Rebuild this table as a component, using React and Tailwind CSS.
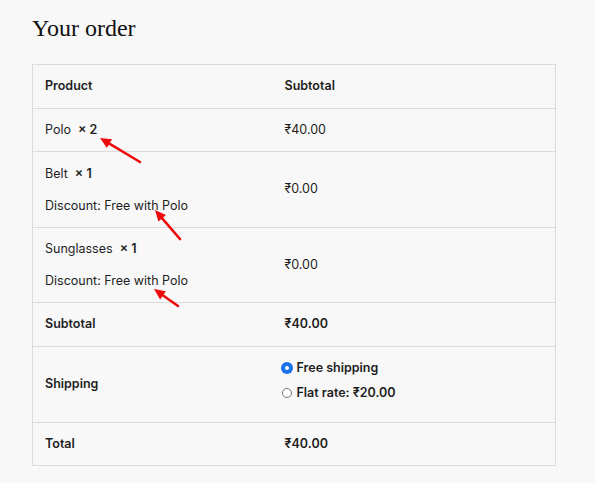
const items = [
  { name: 'Polo', qty: 2, price: '₹40.00', h: 'h-[43px]' },
  { name: 'Belt', qty: 1, price: '₹0.00', note: 'Discount: Free with Polo', h: 'h-[76px]' },
  { name: 'Sunglasses', qty: 1, price: '₹0.00', note: 'Discount: Free with Polo', h: 'h-[75px]' },
]

function Arrow({ x1, y1, x2, y2 }) {
  // x1,y1 = tail, x2,y2 = tip
  const dx = x2 - x1
  const dy = y2 - y1
  const len = Math.hypot(dx, dy)
  const ux = dx / len
  const uy = dy / len
  const hl = 11
  const hw = 5
  const bx = x2 - ux * hl
  const by = y2 - uy * hl
  const pts = `${x2},${y2} ${bx - uy * hw},${by + ux * hw} ${bx + uy * hw},${by - ux * hw}`
  return (
    <g>
      <line x1={x1} y1={y1} x2={bx + ux * 2} y2={by + uy * 2} stroke="#ee0a0a" strokeWidth="2.6" strokeLinecap="round" />
      <polygon points={pts} fill="#ee0a0a" />
    </g>
  )
}

function Radio({ checked }) {
  return (
    <span
      className={
        'inline-block w-[10px] h-[10px] -ml-[3px] rounded-full shrink-0 ' +
        (checked ? 'border-[3px] border-[#1a73e8] bg-white ring-1 ring-[#1a73e8]' : 'border border-[#767676] bg-white')
      }
    />
  )
}

export default function App() {
  return (
    <div className="relative min-h-[483px] bg-[#f8f8f8] px-8 pt-[13px] pb-6 font-['Inter',sans-serif] text-[12.5px] text-[#1e1e1e]">
      <h2 className="font-['Liberation_Serif',serif] text-[24px] leading-[30px] text-[#111] mb-[21px]">Your order</h2>

      <table className="w-[524px] border-collapse border border-[#dcdcdc] table-fixed">
        <colgroup>
          <col className="w-[240px]" />
          <col />
        </colgroup>
        <thead>
          <tr className="h-[44px]">
            <th className="text-left font-semibold px-3">Product</th>
            <th className="text-left font-semibold px-3">Subtotal</th>
          </tr>
        </thead>
        <tbody>
          {items.map((it) => (
            <tr key={it.name} className={'border-t border-[#dcdcdc] ' + it.h}>
              <td className="px-3">
                <div className="leading-5">
                  {it.name}&nbsp;&nbsp;<span className="font-semibold">× {it.qty}</span>
                </div>
                {it.note && <div className="leading-5 mt-3">{it.note}</div>}
              </td>
              <td className="px-3">{it.price}</td>
            </tr>
          ))}
        </tbody>
        <tfoot>
          <tr className="border-t border-[#dcdcdc] h-[44px]">
            <th className="text-left font-semibold px-3">Subtotal</th>
            <td className="px-3 font-semibold">₹40.00</td>
          </tr>
          <tr className="border-t border-[#dcdcdc] h-[76px]">
            <th className="text-left font-semibold px-3">Shipping</th>
            <td className="px-3 align-top pt-[12px]">
              <div className="flex flex-col gap-[7px] font-semibold">
                <label className="flex items-center gap-[5px] h-[18px]">
                  <Radio checked />
                  Free shipping
                </label>
                <label className="flex items-center gap-[5px] h-[18px]">
                  <Radio />
                  Flat rate: ₹20.00
                </label>
              </div>
            </td>
          </tr>
          <tr className="border-t border-[#dcdcdc] h-[43px]">
            <th className="text-left font-semibold px-3">Total</th>
            <td className="px-3 font-semibold">₹40.00</td>
          </tr>
        </tfoot>
      </table>

      <svg className="absolute inset-0 pointer-events-none" width="595" height="483">
        <Arrow x1={140} y1={162} x2={100} y2={138} />
        <Arrow x1={180} y1={239} x2={155} y2={210} />
        <Arrow x1={178} y1={306} x2={154} y2={289} />
      </svg>
    </div>
  )
}
